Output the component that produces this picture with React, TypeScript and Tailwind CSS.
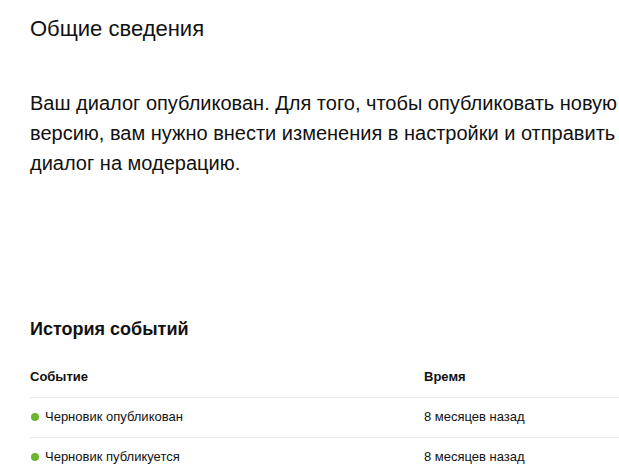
const events = [
  { title: "Черновик опубликован", time: "8 месяцев назад" },
  { title: "Черновик публикуется", time: "8 месяцев назад" },
];

export default function App() {
  return (
    <div className="min-h-[475px] bg-white pl-[30px] font-['Liberation_Sans',Arial,sans-serif] text-[#111]">
      <h1 className="pt-[15px] text-[22px] leading-[28px] font-normal">
        Общие сведения
      </h1>

      <p className="mt-[45px] w-[590px] text-[20px] leading-[30px]">
        Ваш диалог опубликован. Для того, чтобы опубликовать новую версию, вам
        нужно внести изменения в настройки и отправить диалог на модерацию.
      </p>

      <h2 className="mt-[140px] text-[18px] leading-[22px] font-bold">
        История событий
      </h2>

      <table className="mt-[17px] w-[589px] text-[13px]">
        <thead>
          <tr className="border-b border-[#ececec]">
            <th className="h-[40px] w-[394px] text-left font-bold">Событие</th>
            <th className="text-left font-bold">Время</th>
          </tr>
        </thead>
        <tbody>
          {events.map((e) => (
            <tr key={e.title} className="border-b border-[#ececec]">
              <td className="h-[40px]">
                <span className="inline-flex items-center gap-[6px] pl-[1px]">
                  <span className="h-[8px] w-[8px] rounded-full bg-[#6cb52d]" />
                  {e.title}
                </span>
              </td>
              <td>{e.time}</td>
            </tr>
          ))}
        </tbody>
      </table>
    </div>
  );
}
